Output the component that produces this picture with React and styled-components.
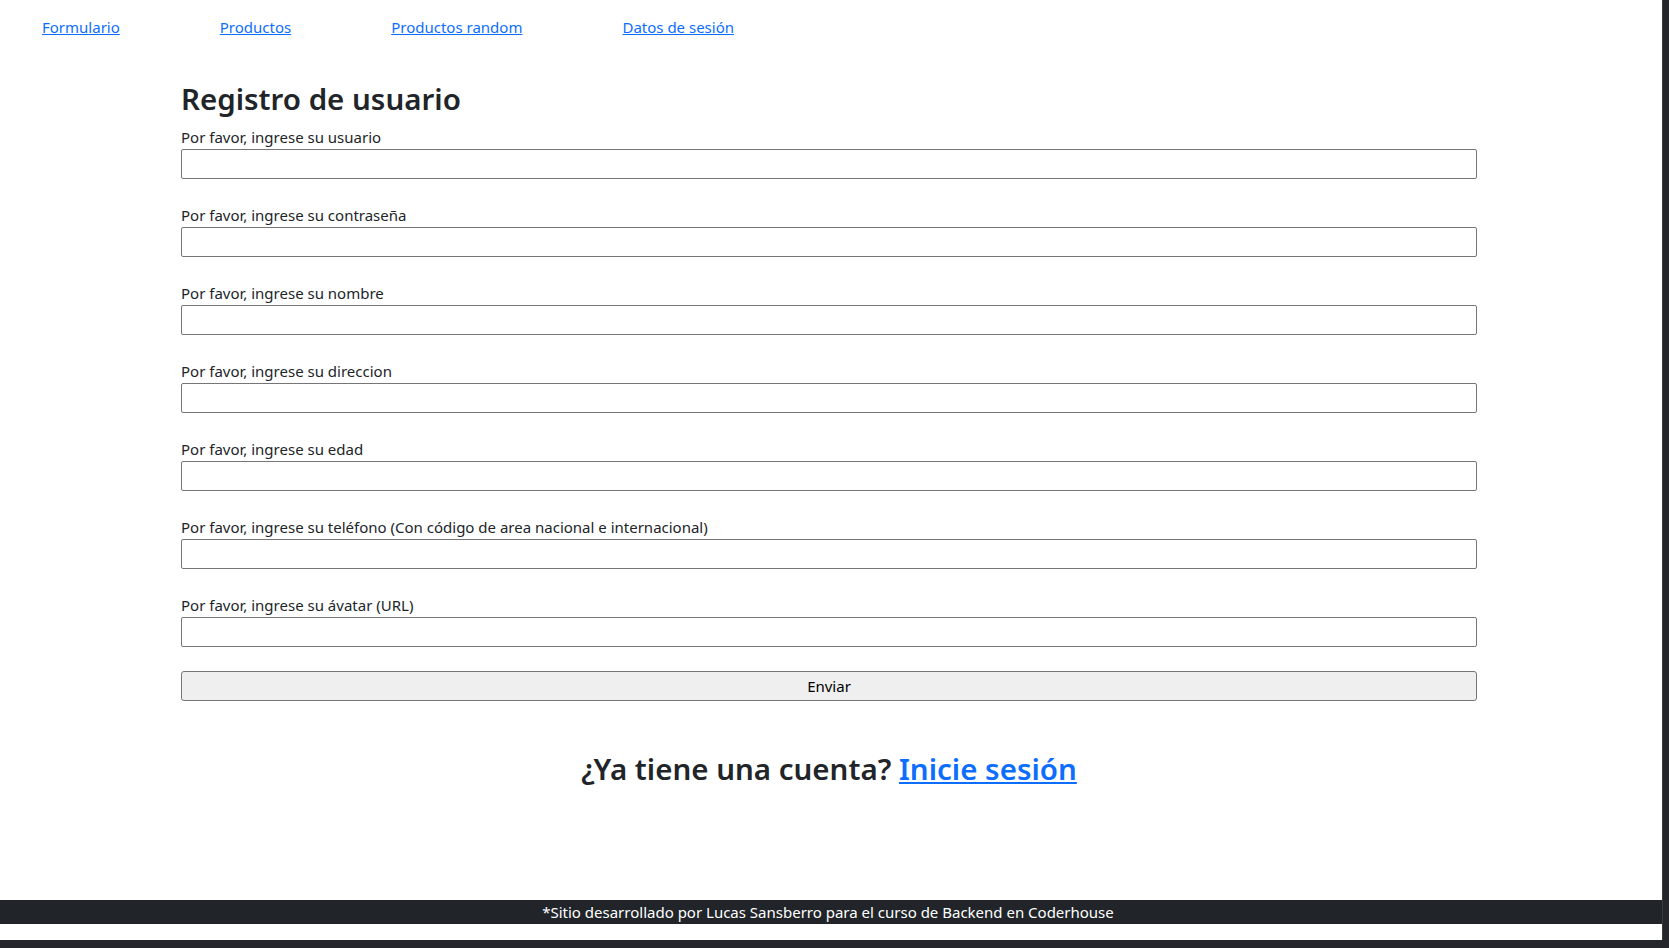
import React from "react";
import styled, { createGlobalStyle } from "styled-components";

const Global = createGlobalStyle`
  html, body { margin: 0; padding: 0; }
  body {
    background: #25262b;
    font-family: "Noto Sans", "Open Sans", sans-serif;
    color: #212529;
  }
`;

const Window = styled.div`
  width: 1663px;
  height: 940px;
  background: #ffffff;
  display: flex;
  flex-direction: column;
  box-sizing: border-box;
  border-right: 1px solid #3a3b40;
`;

const Nav = styled.nav`
  display: flex;
  gap: 100px;
  padding: 15px 0 16px 42px;
  height: 55px;
  box-sizing: border-box;
`;

const NavLink = styled.a`
  color: #0d6efd;
  font-size: 15px;
  line-height: 24px;
  text-decoration: underline;
`;

const Container = styled.main`
  width: 1296px;
  margin: 24px 0 0 181px;
`;

const Title = styled.h2`
  margin: 0 0 7px;
  padding-top: 1px;
  font-size: 29.5px;
  font-weight: 600;
  line-height: 38px;
`;

const Field = styled.div`
  display: flex;
  flex-direction: column;
  margin-bottom: 24px;
`;

const Label = styled.label`
  font-size: 15px;
  line-height: 24px;
`;

const Input = styled.input`
  height: 30px;
  box-sizing: border-box;
  border: 1px solid #767676;
  border-radius: 2px;
  padding: 1px 2px;
  font: inherit;
`;

const Submit = styled.button`
  width: 100%;
  height: 30px;
  box-sizing: border-box;
  border: 1px solid #767676;
  border-radius: 3px;
  background: #efefef;
  color: #000;
  font-family: inherit;
  font-size: 15px;
  line-height: 20px;
`;

const Question = styled.h2`
  margin: 48px 0 0;
  text-align: center;
  font-size: 29.5px;
  font-weight: 600;
  line-height: 40px;
`;

const InlineLink = styled.a`
  color: #0d6efd;
  text-decoration: underline;
`;

const Footer = styled.footer`
  margin-top: auto;
  margin-bottom: 16px;
  height: 24px;
  background: #212529;
  color: #ffffff;
  text-align: center;
  font-size: 15px;
  line-height: 24px;
  padding-right: 6px;
`;

const fields = [
  "Por favor, ingrese su usuario",
  "Por favor, ingrese su contraseña",
  "Por favor, ingrese su nombre",
  "Por favor, ingrese su direccion",
  "Por favor, ingrese su edad",
  "Por favor, ingrese su teléfono (Con código de area nacional e internacional)",
  "Por favor, ingrese su ávatar (URL)",
];

export default function App() {
  return (
    <>
      <Global />
      <Window>
        <Nav>
          <NavLink href="#">Formulario</NavLink>
          <NavLink href="#">Productos</NavLink>
          <NavLink href="#">Productos random</NavLink>
          <NavLink href="#">Datos de sesión</NavLink>
        </Nav>
        <Container>
          <Title>Registro de usuario</Title>
          <form onSubmit={(e) => e.preventDefault()}>
            {fields.map((f, i) => (
              <Field key={i}>
                <Label htmlFor={`f${i}`}>{f}</Label>
                <Input id={`f${i}`} type="text" />
              </Field>
            ))}
            <Submit type="submit">Enviar</Submit>
          </form>
          <Question>
            ¿Ya tiene una cuenta? <InlineLink href="#">Inicie sesión</InlineLink>
          </Question>
        </Container>
        <Footer>
          *Sitio desarrollado por Lucas Sansberro para el curso de Backend en Coderhouse
        </Footer>
      </Window>
    </>
  );
}
